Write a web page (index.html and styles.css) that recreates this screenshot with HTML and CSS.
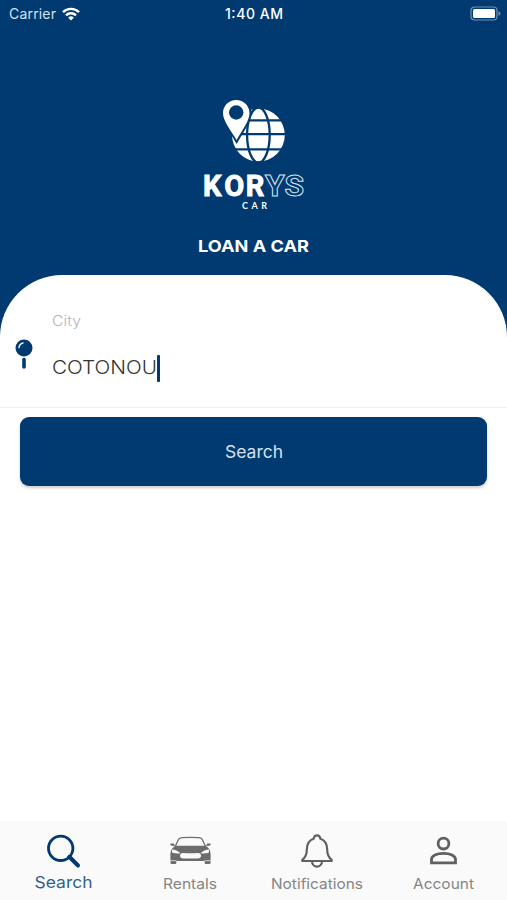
FILE: index.html
```html
<!DOCTYPE html>
<html lang="en">
<head>
    <meta charset="utf-8">
    <meta name="viewport" content="width=device-width, initial-scale=1">
    <title>Korys Car</title>
    <link rel="stylesheet" href="styles.css">
</head>
<body>
    <main class="screen">
        <header class="statusbar">
            <div class="carrier">
                <svg class="carrier-text" width="48" height="20"><text x="0" y="15" textLength="47">Carrier</text></svg>
                <svg width="18" height="14" viewBox="0 0 18 14" fill="none" stroke="#fff" stroke-width="2.4">
                    <path d="M1 5.2a11.3 11.3 0 0 1 16 0M4 8.3a7.1 7.1 0 0 1 10 0"/>
                    <path fill="#fff" stroke="none" d="M9 13.5 6.2 10.7a4 4 0 0 1 5.6 0z"/>
                </svg>
            </div>
            <svg class="clock" width="60" height="20"><text x="1" y="15" textLength="58">1:40 AM</text></svg>
            <svg class="battery" width="31" height="15" viewBox="0 0 31 15">
                <rect x="1" y="1" width="26" height="13" rx="3.5" fill="none" stroke="#7391b0" stroke-width="1.2"/>
                <rect x="3" y="3" width="22" height="9" rx="1.5" fill="#fff"/>
                <path d="M28.5 5v5q2-1 2-2.5t-2-2.5z" fill="#7391b0"/>
            </svg>
        </header>

        <section class="hero">
            <svg class="logo" width="108" height="116" viewBox="200 96 108 116">
                <!-- globe -->
                <circle cx="258.4" cy="135" r="26.4" fill="#fff"/>
                <g fill="none" stroke="#003a70" stroke-width="2.3">
                    <ellipse cx="258.4" cy="135" rx="11.3" ry="27.5"/>
                    <path d="M230 120.3h57M230 134.2h57M230 149.4h57"/>
                </g>
                <!-- pin -->
                <path d="M236.2 99.9c-7.4 0-13.2 5.7-13.2 13 0 8.2 8 17.6 13.6 27.1 5.2-9.5 12.9-18.9 12.9-27.1 0-7.3-5.9-13-13.3-13z" fill="#fff" stroke="#003a70" stroke-width="4" paint-order="stroke"/>
                <circle cx="236.2" cy="112.5" r="7.2" fill="#003a70"/>
                <text class="logo-bold" x="203 224.3 245.8" y="195.7">KOR</text>
                <text class="logo-outline" x="265" y="195.7" textLength="39" lengthAdjust="spacingAndGlyphs">YS</text>
                <text class="logo-small" x="242" y="208.6" textLength="25">CAR</text>
            </svg>
            <h1><svg width="114" height="24"><text x="1" y="18" textLength="111" lengthAdjust="spacingAndGlyphs">LOAN A CAR</text></svg></h1>
        </section>

        <section class="sheet">
            <div class="field">
                <svg class="pushpin" width="18" height="32" viewBox="0 0 18 32">
                    <circle cx="9" cy="9" r="8.5" fill="#003a70"/>
                    <path d="M4 8.5Q4.5 4.8 8 4" fill="none" stroke="#fff" stroke-width="1.4" stroke-linecap="round"/>
                    <path d="M9 20.5v7.5" stroke="#003a70" stroke-width="3.6" stroke-linecap="round"/>
                </svg>
                <div class="field-body">
                    <svg class="field-label" width="30" height="22"><text x="0" y="16" textLength="29" lengthAdjust="spacingAndGlyphs">City</text></svg>
                    <div class="field-value">
                        <svg width="105" height="28"><text x="0" y="20" textLength="105" lengthAdjust="spacingAndGlyphs">COTONOU</text></svg>
                        <span class="caret"></span>
                    </div>
                </div>
            </div>
        </section>

        <section class="content">
            <button class="search-button" type="button">
                <svg width="60" height="24"><text x="1" y="18" textLength="58" lengthAdjust="spacingAndGlyphs">Search</text></svg>
            </button>
        </section>

        <nav class="tabs">
            <a class="tab active">
                <svg class="icon" width="36" height="36" viewBox="0 0 36 36" fill="none" stroke="#003a70">
                    <circle cx="15.7" cy="15.3" r="12.200" stroke-width="2.8"/>
                    <path d="m24.500 24 8.500 8.500" stroke-width="4" stroke-linecap="round"/>
                    <path d="m23 22.700 3 3" stroke-width="2.5"/>
                </svg>
                <svg class="tab-text" width="60" height="24"><text x="1.500" y="17" textLength="58" lengthAdjust="spacingAndGlyphs">Search</text></svg>
            </a>
            <a class="tab">
                <svg class="icon" width="44" height="36" viewBox="0 0 44 36">
                    <path fill="none" stroke="#6c6c6c" stroke-width="1.3" d="M7.200 13.500 10.300 6.800Q11.300 5 14 4.700q8.500-.8 17 0 2.500.3 3.400 2.100L37.500 13.500"/>
                    <path fill="#6c6c6c" d="M7 12.700h31l3.200 3.300q1.400 2 1.400 5v8.500q0 1.600-1.200 1.600h-3.700q-1 0-1-1.600v-1.500H8.300v1.500q0 1.600-1 1.600H3.600q-1.200 0-1.200-1.600V21q0-3 1.400-5z"/>
                    <path fill="#6c6c6c" d="M2.500 10.400h2.700q1 0 1.200 1l.3 1.600-2.600-.3Q1.700 12.300 2.500 10.400zM42.500 10.400h-2.700q-1 0-1.200 1l-.3 1.600 2.600-.3q2.400-.4 1.600-2.300z"/>
                    <path fill="#fafafa" d="M3.800 16.500q5 .2 8.700 3.800-4 .5-8.200-.5zM41.200 16.500q-5 .2-8.700 3.800 4 .5 8.200-.5zM15 19.900q7.500.6 15 0 3 0 3 2.900 0 2.700-3.500 2.700h-14q-3.500 0-3.500-2.700 0-2.900 3-2.900z"/>
                    <path fill="none" stroke="#fafafa" stroke-width=".7" d="M2 27.700h6.500M36.500 27.700H43"/>
                </svg>
                <svg class="tab-text" width="58" height="24"><text x="2" y="18" textLength="54" lengthAdjust="spacingAndGlyphs">Rentals</text></svg>
            </a>
            <a class="tab">
                <svg class="icon" width="36" height="36" viewBox="0 0 36 36" fill="none" stroke="#606060" stroke-width="2.2" stroke-linejoin="round">
                    <path d="M3.300 28v-1.200c3.200-2.300 4.500-5 4.500-10 0-6 2.200-9.500 6.800-11C15 3.600 16 2.400 18 2.400s3 1.200 3.400 3.400c4.600 1.500 6.800 5 6.800 11 0 5 1.300 7.700 4.500 10V28z"/>
                    <path d="M13 28.300a5 5.300 0 0 0 10 0"/>
                </svg>
                <svg class="tab-text" width="96" height="24"><text x="2" y="18" textLength="92" lengthAdjust="spacingAndGlyphs">Notifications</text></svg>
            </a>
            <a class="tab">
                <svg class="icon" width="36" height="36" viewBox="0 0 36 36" fill="none" stroke="#606060" stroke-width="2.8">
                    <circle cx="17.500" cy="10.600" r="5.400"/>
                    <path d="M5.500 29.900v-3.300c0-3.900 5.300-6.200 12-6.200s12 2.300 12 6.200v3.300z"/>
                </svg>
                <svg class="tab-text" width="64" height="24"><text x="1" y="18" textLength="61" lengthAdjust="spacingAndGlyphs">Account</text></svg>
            </a>
        </nav>
    </main>
</body>
</html>
```

FILE: styles.css
```css
* { box-sizing: border-box }

body {
    margin: 0;
    background-color: white;
    font-family: Inter, "Open Sans", sans-serif;
}

svg {
    display: block;
    flex: none;
}

.screen {
    display: flex;
    flex-direction: column;
    height: 900px;
    background: linear-gradient(#003a70 340px, white 340px);
}

.statusbar {
    display: grid;
    grid-template-columns: 1fr 60px 1fr;
    height: 27px;
    padding: 0 6px 0 9px;
    align-items: center;
    fill: white;
    font-size: 14px;
}

.carrier {
    display: flex;
    align-items: center;
    gap: 5px;
}

.clock {
    position: relative;
    left: -1px;
    font-weight: 500;
}

.carrier-text { fill: #d5e2ef }

.battery { justify-self: end }

.hero {
    display: flex;
    flex-direction: column;
    align-items: center;
    height: 248px;
    padding-top: 69px;
}

.logo { fill: white }

.logo-bold, .logo-outline {
    font-family: Roboto, sans-serif;
    font-size: 30px;
    font-weight: 700;
}

.logo-bold {
    font-size: 29px;
    stroke: white;
    stroke-width: 0.9px;
}

.logo-outline {
    fill: none;
    stroke: #d5e2ef;
    stroke-width: 1px;
}

.logo-small {
    font-family: Lato, sans-serif;
    font-size: 9px;
    font-weight: 700;
}

h1 {
    margin: 22px 0 0;
    fill: white;
    font-size: 16.5px;
    font-weight: 700;
}

.sheet {
    height: 133px;
    padding: 35px 15px 0;
    background-color: white;
    border-bottom: 1px solid #f0f0f0;
    border-radius: 62px 62px 0 0;
}

.field {
    display: flex;
    gap: 19px;
}

.pushpin { margin-top: 29px }

.field-label {
    fill: #b4b4ba;
    font-size: 14px;
    font-weight: 300;
}

.field-value {
    display: flex;
    align-items: center;
    margin-top: 22px;
    fill: #333;
    font-size: 19px;
    font-weight: 300;
}

.caret {
    width: 3px;
    height: 27px;
    border-radius: 1px;
    background-color: #003a70;
}

.content {
    flex: 1;
    padding: 9px 20px;
}

.search-button {
    display: flex;
    justify-content: center;
    align-items: center;
    width: 100%;
    height: 69px;
    border: 0;
    border-radius: 9px;
    background-color: #003a70;
    box-shadow: 0 2px 3px rgba(0, 0, 0, 0.2);
    fill: #d5e2ef;
    font: 400 17px Inter, sans-serif;
}

.tabs {
    display: grid;
    grid-template-columns: repeat(4, 1fr);
    height: 79px;
    padding-top: 12px;
    background-color: #fafafa;
}

.tab {
    display: flex;
    flex-direction: column;
    align-items: center;
    fill: #858585;
    font-size: 14.5px;
}

.tab-text { margin-top: 2px }

.active {
    fill: #315f8c;
    font-size: 16.5px;
}
```
